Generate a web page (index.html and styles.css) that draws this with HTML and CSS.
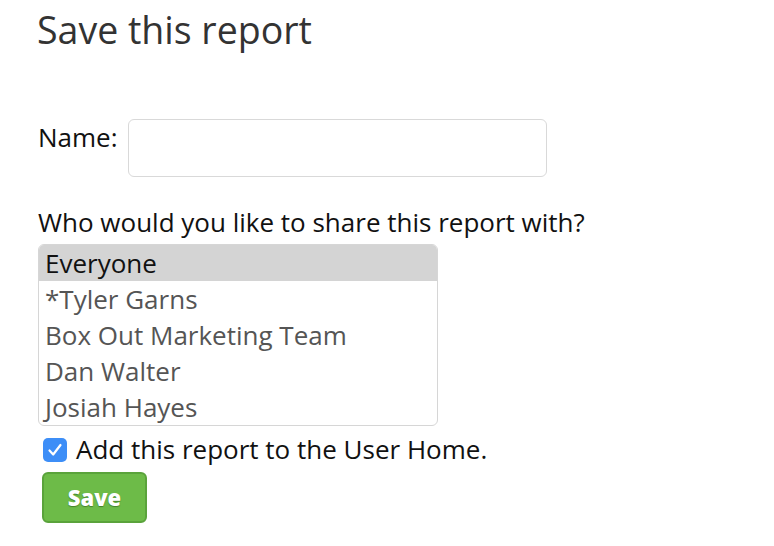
FILE: index.html
```html
<!DOCTYPE html>
<html>
<head>
<meta charset="utf-8">
<link rel="stylesheet" href="styles.css">
</head>
<body>
<div class="page">
  <h1 class="title">Save this report</h1>
  <div class="name-row">
    <label class="name-label">Name:</label>
    <div class="name-input"></div>
  </div>
  <div class="question">Who would you like to share this report with?</div>
  <div class="listbox">
    <div class="opt selected">Everyone</div>
    <div class="opt">*Tyler Garns</div>
    <div class="opt">Box Out Marketing Team</div>
    <div class="opt">Dan Walter</div>
    <div class="opt">Josiah Hayes</div>
  </div>
  <div class="check-row">
    <span class="checkbox">
      <svg width="24" height="24" viewBox="0 0 24 24"><path d="M6.5 12.5 L10.2 16.5 L17.5 7" fill="none" stroke="#fff" stroke-width="2.2" stroke-linecap="round" stroke-linejoin="round"/></svg>
    </span>
    <span class="check-label">Add this report to the User Home.</span>
  </div>
  <button class="save">Save</button>
</div>
</body>
</html>
```
FILE: styles.css
```css
html, body { margin: 0; padding: 0; background: #fff; }
body { font-family: "Open Sans", sans-serif; color: #111; }
.page { padding: 7px 0 0 37px; }
.title { margin: 0; font-size: 37.5px; font-weight: 400; color: #333; line-height: 46px; }
.name-row { display: flex; align-items: flex-start; margin-top: 66px; }
.name-label { font-size: 26px; line-height: 32px; padding-top: 2px; margin-left: 1px; width: 90px; }
.name-input { width: 417px; height: 56px; border: 1px solid #d9d9d9; border-radius: 6px; }
.question { font-size: 26px; line-height: 32px; margin-top: 29px; margin-left: 1px; }
.listbox { width: 398px; margin-top: 6px; margin-left: 1px; border: 1px solid #d6d6d6; border-radius: 6px; overflow: hidden; }
.opt { height: 36px; line-height: 36px; font-size: 26px; padding-left: 6px; color: #555; }
.opt.selected { background: #d4d4d4; color: #111; }
.check-row { display: flex; align-items: flex-start; margin-top: 9px; margin-left: 6px; }
.checkbox { width: 24px; height: 24px; margin-top: 3px; background: #3d8ef7; border-radius: 5px; display: inline-block; }
.checkbox svg { display: block; }
.check-label { font-size: 26px; margin-left: 9px; line-height: 28px; }
.save { display: block; margin-top: 9px; margin-left: 5px; width: 105px; height: 51px; padding: 0 0 2px; background: #6dbb48; border: 2px solid #5aa33b; border-radius: 6px; color: #fff; font-family: "Open Sans", sans-serif; font-weight: 800; font-size: 22px; text-shadow: 0 1px 1px rgba(40,90,20,0.6); }
```
